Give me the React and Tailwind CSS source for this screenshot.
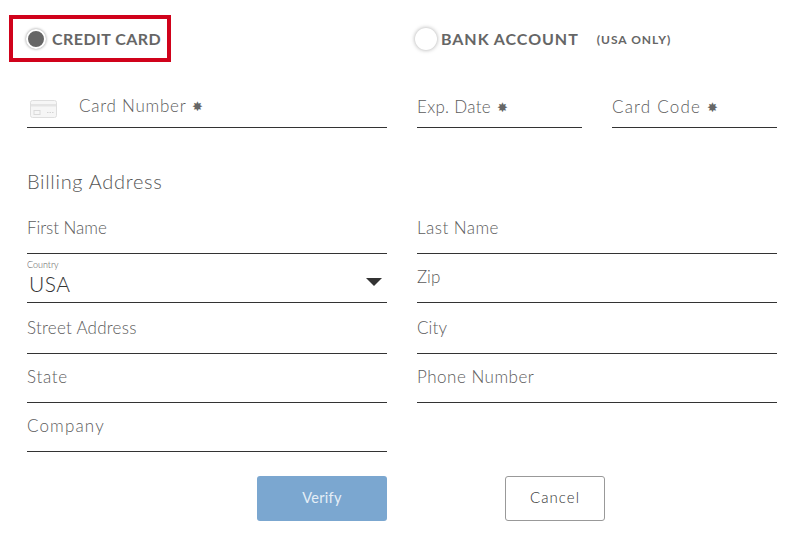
const font = "font-['Lato','Open_Sans',sans-serif]";

function Star() {
  return <span className="ml-[6px] text-[13px] font-normal text-[#666]">✸</span>;
}

function Field({ label, required, className }) {
  return (
    <div className={`flex items-end border-b border-[#333] text-[17px] font-light leading-5 text-[#5c5c5c] ${className}`}>
      <span>{label}</span>
      {required && <Star />}
    </div>
  );
}

function CardIcon() {
  return (
    <svg width="27" height="18" viewBox="0 0 27 18" fill="none" className="shrink-0">
      <rect x="0.5" y="0.5" width="26" height="17" rx="2" fill="#f6f6f6" stroke="#dedede" />
      <rect x="1" y="4" width="25" height="2.5" fill="#e4e4e4" />
      <rect x="4" y="10.5" width="6" height="4" fill="none" stroke="#dadada" />
      <path d="M17 12.5h1.5M19.5 12.5H21M22 12.5h1.5" stroke="#d4d4d4" />
    </svg>
  );
}

export default function App() {
  return (
    <div className={`h-[559px] w-[807px] bg-white pt-[15px] ${font}`}>
      <div className="flex h-[47px]">
        <div className="ml-[9px] flex w-[162px] items-center border-4 border-[#d0021b] pl-[13px]">
          <div className="h-[20px] w-[20px] rounded-full border-2 border-white bg-[#666] shadow-[0_0_3px_rgba(0,0,0,0.45)]" />
          <span className="ml-[6px] text-[16px] font-bold tracking-[0.45px] text-[#666]">CREDIT CARD</span>
        </div>
        <div className="ml-[244px] flex items-center">
          <div className="h-[22px] w-[22px] rounded-full bg-white shadow-[0_0_4px_rgba(0,0,0,0.35)]" />
          <span className="ml-[4px] text-[16px] font-bold tracking-[0.95px] text-[#666]">BANK ACCOUNT</span>
          <span className="ml-[18px] mt-[2px] text-[12px] font-bold tracking-[1px] text-[#666]">(USA ONLY)</span>
        </div>
      </div>

      <div className="grid grid-cols-[360px_360px] gap-x-[30px] pl-[27px]">
        <div className="flex h-[66px] items-end gap-[22px] border-b border-[#333] pb-[11px]">
          <div className="mb-[-2px] ml-[3px]">
            <CardIcon />
          </div>
          <div className="flex items-center text-[17px] font-light leading-5 tracking-[0.75px] text-[#5c5c5c]">
            Card Number
            <Star />
          </div>
        </div>
        <div className="grid grid-cols-[165px_165px] gap-x-[30px]">
          <Field label="Exp. Date" required className="h-[66px] pb-[10px] tracking-[0.3px]" />
          <Field label="Card Code" required className="h-[66px] pb-[10px] tracking-[1.2px]" />
        </div>
      </div>

      <div className="pl-[27px] pt-[42px] text-[20px] font-light leading-[22px] tracking-[0.7px] text-[#555]">Billing Address</div>

      <div className="grid grid-cols-[360px_360px] gap-x-[30px] pl-[27px]">
        <Field label="First Name" className="h-[62px] pb-[15px] tracking-[-0.05px]" />
        <Field label="Last Name" className="h-[62px] pb-[15px] tracking-[0.45px]" />
        <div className="relative h-[49px] border-b border-[#333]">
          <div className="pt-[5px] text-[9px] font-light leading-[11px] text-[#555]">Country</div>
          <div className="ml-[2px] pt-[1px] text-[21px] font-light leading-[26px] tracking-[0.5px] text-[#333]">USA</div>
          <div className="absolute right-[5px] top-[24px] h-0 w-0 border-x-[8px] border-t-[8px] border-x-transparent border-t-[#333]" />
        </div>
        <Field label="Zip" className="h-[49px] pb-[15px] tracking-[0px]" />
        <Field label="Street Address" className="h-[51px] pb-[15px] tracking-[0.25px]" />
        <Field label="City" className="h-[51px] pb-[15px] tracking-[0.1px]" />
        <Field label="State" className="h-[49px] pb-[15px] tracking-[0.7px]" />
        <Field label="Phone Number" className="h-[49px] pb-[15px] tracking-[0.5px]" />
        <Field label="Company" className="h-[49px] pb-[15px] tracking-[1.15px]" />
      </div>

      <div className="mt-[24px] flex pl-[257px]">
        <button className="h-[45px] w-[130px] rounded-[3px] bg-[#7ba7d0] pb-[1px] text-[14.5px] tracking-[0.3px] text-[#e6eff7]">Verify</button>
        <button className="ml-[118px] h-[45px] w-[100px] rounded-[3px] border border-[#999] bg-white pb-[2px] text-[15px] font-light tracking-[1.05px] text-[#333]">Cancel</button>
      </div>
    </div>
  );
}
